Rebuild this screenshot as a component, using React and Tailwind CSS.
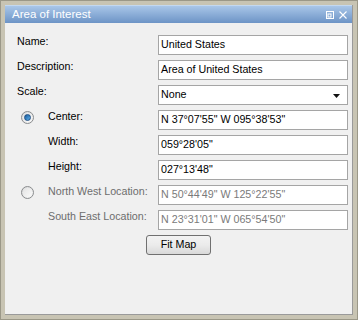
import React from "react";

const font = { fontFamily: '"Liberation Sans", Arial, sans-serif' };

function Radio({ checked }) {
  return (
    <div className="w-[13px] h-[13px] rounded-full border border-[#8a8c8e] bg-gradient-to-br from-[#d9dadb] to-[#f6f6f6] flex items-center justify-center">
      <div className="w-[9px] h-[9px] rounded-full bg-gradient-to-br from-[#e4e4e4] to-[#fafafa] flex items-center justify-center">
        {checked && (
          <div className="w-[7px] h-[7px] rounded-full bg-gradient-to-br from-[#1a5a9c] to-[#5cb0ea] border border-[#1d4f85]" />
        )}
      </div>
    </div>
  );
}

function Field({ value, disabled, select }) {
  return (
    <div className="w-[190px] h-[20px] border border-[#a5a5a5] bg-white flex items-center pl-[2px] pr-[7px] pb-[1px]">
      <span className={`flex-1 whitespace-nowrap ${disabled ? "text-[#7a7a7a]" : "text-black"}`}>{value}</span>
      {select && (
        <svg width="7" height="4" viewBox="0 0 7 4" className="mt-[2px]">
          <path d="M0 0H7L3.5 4Z" fill="#111" />
        </svg>
      )}
    </div>
  );
}

function Row({ label, value, indent, radio, disabled, select }) {
  return (
    <div className="flex items-start h-[20px]">
      {indent && (
        <div className="w-[31px] pl-[4px] pt-[1px] shrink-0">
          {radio && <Radio checked={radio === "on"} />}
        </div>
      )}
      <div className={`${indent ? "w-[110px]" : "w-[141px]"} shrink-0 -mt-[2px] ${disabled ? "text-[#6d6d6d]" : "text-black"}`}>
        {label}
      </div>
      <Field value={value} disabled={disabled} select={select} />
    </div>
  );
}

export default function App() {
  return (
    <div style={font} className="w-[358px] h-[320px] bg-[#c8c4b3] border border-[#9b9888] p-[4px] text-[10.7px]">
      <div className="w-full h-full flex flex-col bg-[#f0f0f0] border-r border-b border-[#9a9a9a]">
        <div className="h-[18px] shrink-0 bg-gradient-to-b from-[#a9c6e8] to-[#6d94c6] border-t border-[#c3d8f0] flex items-center pl-[7px] pr-[5px]">
          <span className="text-white text-[11.5px] flex-1 leading-none">Area of Interest</span>
          <svg width="8" height="8" viewBox="0 0 8 8" className="mr-[5px]">
            <rect x="0.5" y="0.5" width="7" height="7" fill="none" stroke="#fff" />
            <rect x="2" y="3" width="3" height="3" fill="none" stroke="#fff" />
          </svg>
          <svg width="8" height="8" viewBox="0 0 8 8">
            <path d="M0.5 0.5L7.5 7.5M7.5 0.5L0.5 7.5" stroke="#fff" strokeWidth="1.1" />
          </svg>
        </div>
        <div className="flex flex-col gap-[5px] pt-[12px] pl-[12px]">
          <Row label="Name:" value="United States" />
          <Row label="Description:" value="Area of United States" />
          <Row label="Scale:" value="None" select />
          <Row label="Center:" value={'N 37°07\'55" W 095°38\'53"'} indent radio="on" />
          <Row label="Width:" value={'059°28\'05"'} indent />
          <Row label="Height:" value={'027°13\'48"'} indent />
          <Row label="North West Location:" value={'N 50°44\'49" W 125°22\'55"'} indent radio="off" disabled />
          <Row label="South East Location:" value={'N 23°31\'01" W 065°54\'50"'} indent disabled />
        </div>
        <div className="flex justify-center pt-[5px]">
          <button className="w-[65px] h-[20px] rounded-[3px] border border-[#707070] bg-gradient-to-b from-[#f3f3f3] via-[#ebebeb] to-[#d9d9d9] text-black text-[10.7px] leading-none pb-[1px]">
            Fit Map
          </button>
        </div>
      </div>
    </div>
  );
}
